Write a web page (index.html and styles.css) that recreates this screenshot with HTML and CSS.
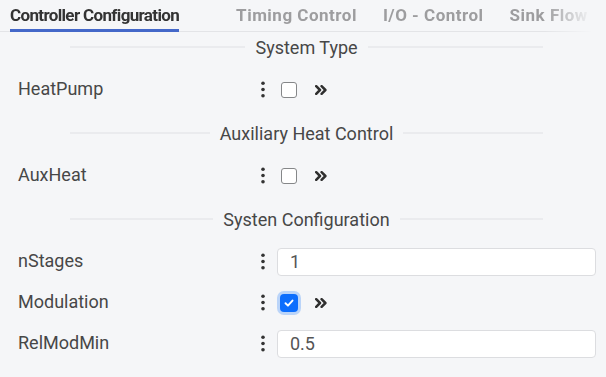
FILE: index.html
```html
<!DOCTYPE html>
<html>
<head>
<meta charset="utf-8">
<link rel="stylesheet" href="styles.css">
</head>
<body>
<div class="tabs">
  <div class="tab active">Controller Configuration</div>
  <div class="tab">Timing Control</div>
  <div class="tab">I/O - Control</div>
  <div class="tab">Sink Flow</div>
</div>

<div class="section first"><span>System Type</span></div>
<div class="row">
  <div class="label">HeatPump</div>
  <div class="ctrl">
    <svg class="kebab" viewBox="0 0 4 17"><circle cx="2" cy="2.2" r="1.8"/><circle cx="2" cy="8.5" r="1.8"/><circle cx="2" cy="14.8" r="1.8"/></svg>
    <span class="check"></span>
    <svg class="more" viewBox="0 0 12 10"><path d="M1.2 1.2 L5 5 L1.2 8.8 M6.6 1.2 L10.4 5 L6.6 8.8"/></svg>
  </div>
</div>

<div class="section"><span>Auxiliary Heat Control</span></div>
<div class="row">
  <div class="label">AuxHeat</div>
  <div class="ctrl">
    <svg class="kebab" viewBox="0 0 4 17"><circle cx="2" cy="2.2" r="1.8"/><circle cx="2" cy="8.5" r="1.8"/><circle cx="2" cy="14.8" r="1.8"/></svg>
    <span class="check"></span>
    <svg class="more" viewBox="0 0 12 10"><path d="M1.2 1.2 L5 5 L1.2 8.8 M6.6 1.2 L10.4 5 L6.6 8.8"/></svg>
  </div>
</div>

<div class="section"><span>Systen Configuration</span></div>
<div class="row">
  <div class="label">nStages</div>
  <div class="ctrl">
    <svg class="kebab" viewBox="0 0 4 17"><circle cx="2" cy="2.2" r="1.8"/><circle cx="2" cy="8.5" r="1.8"/><circle cx="2" cy="14.8" r="1.8"/></svg>
    <div class="field">1</div>
  </div>
</div>
<div class="row">
  <div class="label">Modulation</div>
  <div class="ctrl">
    <svg class="kebab" viewBox="0 0 4 17"><circle cx="2" cy="2.2" r="1.8"/><circle cx="2" cy="8.5" r="1.8"/><circle cx="2" cy="14.8" r="1.8"/></svg>
    <span class="check on"><svg viewBox="0 0 16 16"><path d="M4 8.3 L6.8 11 L12 5.2"/></svg></span>
    <svg class="more" viewBox="0 0 12 10"><path d="M1.2 1.2 L5 5 L1.2 8.8 M6.6 1.2 L10.4 5 L6.6 8.8"/></svg>
  </div>
</div>
<div class="row">
  <div class="label">RelModMin</div>
  <div class="ctrl">
    <svg class="kebab" viewBox="0 0 4 17"><circle cx="2" cy="2.2" r="1.8"/><circle cx="2" cy="8.5" r="1.8"/><circle cx="2" cy="14.8" r="1.8"/></svg>
    <div class="field">0.5</div>
  </div>
</div>
</body>
</html>
```

FILE: styles.css
```css
html, body {
  margin: 0;
  padding: 0;
  background: #f5f6f8;
  font-family: Roboto, "Noto Sans", sans-serif;
  color: #474747;
}

.tabs {
  display: flex;
  height: 32px;
  margin-right: 9px;
  padding-left: 10px;
  box-sizing: border-box;
  box-shadow: inset 0 -1px 0 #e3e4e7;
  overflow: hidden;
  white-space: nowrap;
  -webkit-mask-image: linear-gradient(to right, #000 0, #000 545px, rgba(0,0,0,0) 592px);
  mask-image: linear-gradient(to right, #000 0, #000 545px, rgba(0,0,0,0) 592px);
}

.tab {
  flex: none;
  height: 32px;
  box-sizing: border-box;
  padding-top: 5px;
  line-height: 20px;
  font-size: 17px;
  font-weight: 700;
  color: #9d9d9f;
  letter-spacing: 0.5px;
  margin-right: 26px;
}

.tab.active {
  color: #333;
  letter-spacing: -0.65px;
  border-bottom: 3px solid #4468c9;
  margin-right: 57px;
}

.section {
  display: flex;
  align-items: center;
  gap: 10px;
  height: 30px;
  margin: 8px 63px 7px 70px;
  font-size: 18px;
  color: #474747;
}

.section.first {
  margin-top: 0;
}

.section::before,
.section::after {
  content: "";
  flex: 1;
  height: 2px;
  background: #eaebee;
}

.row {
  display: flex;
  align-items: center;
  height: 41px;
}

.label {
  width: 240px;
  flex: none;
  padding-left: 18px;
  padding-bottom: 3px;
  font-size: 18px;
  color: #474747;
}

.ctrl {
  flex: 1;
  display: flex;
  align-items: center;
  padding-left: 3px;
  padding-right: 10px;
}

.kebab {
  width: 4px;
  height: 17px;
  flex: none;
  fill: #333;
}

.check {
  flex: none;
  margin-left: 16px;
  width: 16px;
  height: 16px;
  box-sizing: border-box;
  border: 1px solid #858789;
  border-radius: 3px;
  background: #fff;
  display: flex;
}

.check.on {
  background: #0d6efd;
  border-color: #0d6efd;
  box-shadow: 0 0 0 1px #0d6efd, 0 0 0 4px rgba(13, 110, 253, 0.25);
}

.check svg {
  width: 14px;
  height: 14px;
  fill: none;
  stroke: #fff;
  stroke-width: 2.2;
  stroke-linecap: round;
  stroke-linejoin: round;
}

.more {
  flex: none;
  margin-left: 18px;
  width: 12px;
  height: 10px;
  fill: none;
  stroke: #2f2f2f;
  stroke-width: 2.5;
  stroke-linecap: round;
  stroke-linejoin: round;
}

.field {
  flex: 1;
  margin-left: 12px;
  height: 28px;
  box-sizing: border-box;
  border: 1px solid #dcdde0;
  border-radius: 4px;
  background: #fff;
  padding-left: 12px;
  display: flex;
  align-items: center;
  font-size: 18px;
  color: #555;
}
```
